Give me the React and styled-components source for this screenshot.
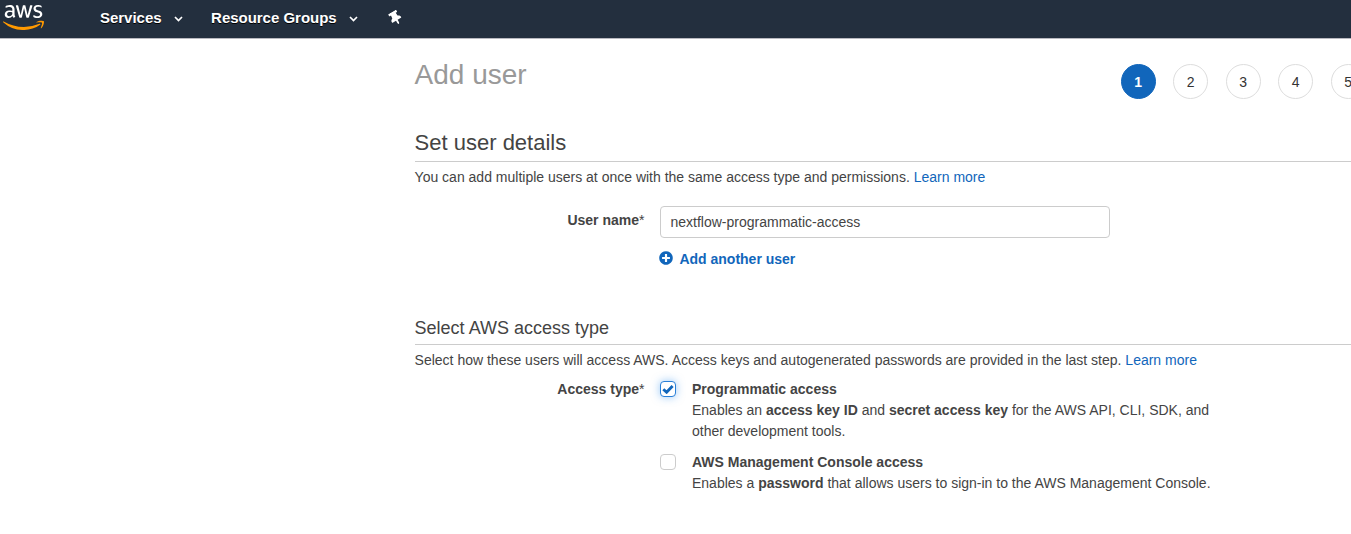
import React from "react";
import styled, { createGlobalStyle } from "styled-components";
import { FaAws, FaPlusCircle, FaThumbtack } from "react-icons/fa";

const GlobalStyle = createGlobalStyle`
  * { box-sizing: border-box; }
  html, body { margin: 0; background: #fff; overflow: hidden; }
  body {
    font-family: "Liberation Sans", Arial, Helvetica, sans-serif;
    font-size: 14px;
    line-height: 21px;
    color: #444;
  }
`;

const Page = styled.div`
  width: 100%;
  height: 534px;
  overflow: hidden;
`;

const NavBar = styled.header`
  display: flex;
  align-items: flex-start;
  height: 39px;
  padding-left: 3px;
  background: #232f3e;
  border-bottom: 1px solid #b9b9c0;
`;

const Logo = styled.div`
  width: 41px;
  height: 25px;
  margin: 5px 56px 0 0;
  svg { display: block; width: 41px; height: 25px; }
  svg + svg { width: 0; height: 0; }
`;

const NavItem = styled.div`
  display: flex;
  align-items: center;
  height: 34px;
  margin-right: ${(p) => p.$gap}px;
  color: #fff;
  font-size: 15px;
  font-weight: bold;
  letter-spacing: -0.02px;
  text-shadow: 0 1px 0 #000;
`;

const Chevron = styled.svg`
  width: 9px;
  height: 6px;
  margin: 4px 0 0 12px;
`;

const Pin = styled(FaThumbtack)`
  width: 11px;
  height: 14px;
  margin-top: 11px;
  color: #fff;
  transform: rotate(-30deg);
`;

const Main = styled.main`
  width: 1100px;
  padding: 25px 0 0 414.6px;
  box-sizing: content-box;
`;

const TitleRow = styled.div`
  display: flex;
  height: 62px;
`;

const Title = styled.h1`
  width: 706px;
  margin: -7px 0 0;
  font-size: 28px;
  line-height: 36px;
  font-weight: normal;
  color: #999;
`;

const Steps = styled.div`
  display: flex;
  gap: 17.5px;
`;

const Step = styled.div`
  display: flex;
  align-items: center;
  justify-content: center;
  width: 35px;
  height: 35px;
  border-radius: 50%;
  padding-top: 1px;
  border: 1px solid ${(p) => (p.$active ? "#1166bb" : "#ddd")};
  background: ${(p) => (p.$active ? "#1166bb" : "#fff")};
  color: ${(p) => (p.$active ? "#fff" : "#333")};
  font-weight: ${(p) => (p.$active ? "bold" : "normal")};
`;

const Heading = styled.h2`
  height: ${(p) => p.$height}px;
  margin: ${(p) => p.$top || 0}px 0 5px;
  border-bottom: 1px solid #ccc;
  font-size: ${(p) => p.$size}px;
  line-height: ${(p) => p.$line}px;
  font-weight: normal;
  color: #444;
`;

const Text = styled.p`
  margin: 0;
`;

const Link = styled.a`
  color: #1166bb;
`;

const FormRow = styled.div`
  display: flex;
  margin-top: ${(p) => p.$top}px;
`;

const Label = styled.div`
  width: 229.9px;
  margin-right: 15.5px;
  padding-top: ${(p) => p.$offset || 0}px;
  text-align: right;
  font-weight: bold;
  span { font-weight: normal; }
`;

const Field = styled.div`
  width: 560px;
`;

const Input = styled.input`
  display: block;
  width: 450px;
  height: 32px;
  padding: 0 9.5px;
  border: 1px solid #ccc;
  border-radius: 4px;
  outline: none;
  font: inherit;
  color: #444;
`;

const AddButton = styled.div`
  display: flex;
  align-items: center;
  gap: 6px;
  margin: 11px 0 0 -0.6px;
  color: #1166bb;
  font-weight: bold;
  svg { width: 14px; height: 14px; margin-top: -3px; }
`;

const Option = styled.div`
  display: flex;
  gap: 16px;
  margin-bottom: 10px;
`;

const Checkbox = styled.div`
  display: flex;
  flex: none;
  align-items: center;
  justify-content: center;
  width: 16px;
  height: 16px;
  margin-top: 2px;
  border: 1px solid ${(p) => (p.$checked ? "#2a80d8" : "#ccc")};
  border-radius: 4px;
  background: #fff;
  box-shadow: ${(p) => (p.$checked ? "0 0 8px rgba(50, 145, 240, 0.5)" : "none")};
  svg { width: 12px; height: 10px; }
`;

const OptionText = styled.div`
  width: 528px;
`;

const Down = () => (
  <Chevron viewBox="0 0 9 6">
    <path d="M1 1l3.5 3.5L8 1" fill="none" stroke="#fff" strokeWidth="1.7" />
  </Chevron>
);

export default function App() {
  return (
    <Page>
      <GlobalStyle />
      <NavBar>
        <Logo>
          <FaAws viewBox="0 64 640 384" preserveAspectRatio="none" fill="url(#awsFill)" />
          <svg>
            <defs>
              <linearGradient id="awsFill" gradientUnits="userSpaceOnUse" x1="0" y1="0" x2="0" y2="512">
                <stop offset="0.57" stopColor="#fff" />
                <stop offset="0.57" stopColor="#f90" />
              </linearGradient>
            </defs>
          </svg>
        </Logo>
        <NavItem $gap={28.5}>Services<Down /></NavItem>
        <NavItem $gap={32.5}>Resource Groups<Down /></NavItem>
        <Pin preserveAspectRatio="none" />
      </NavBar>
      <Main>
        <TitleRow>
          <Title>Add user</Title>
          <Steps>
            {[1, 2, 3, 4, 5].map((n) => (
              <Step key={n} $active={n === 1}>{n}</Step>
            ))}
          </Steps>
        </TitleRow>
        <Heading $size={22} $line={33} $height={36}>Set user details</Heading>
        <Text>
          You can add multiple users at once with the same access type and permissions. <Link>Learn more</Link>
        </Text>
        <FormRow $top={18}>
          <Label $offset={4}>User name<span>*</span></Label>
          <Field>
            <Input defaultValue="nextflow-programmatic-access" />
            <AddButton><FaPlusCircle />Add another user</AddButton>
          </Field>
        </FormRow>
        <Heading $top={45} $size={18} $line={27} $height={30}>Select AWS access type</Heading>
        <Text>
          Select how these users will access AWS. Access keys and autogenerated passwords are provided in the last
          step. <Link>Learn more</Link>
        </Text>
        <FormRow $top={8}>
          <Label>Access type<span>*</span></Label>
          <Field>
            <Option>
              <Checkbox $checked>
                <svg viewBox="0 0 12 10">
                  <path d="M1.3 5.2 4.6 8.2 10.6 1.9" fill="none" stroke="#1166bb" strokeWidth="2.9" />
                </svg>
              </Checkbox>
              <OptionText>
                <b>Programmatic access</b>
                <br />
                Enables an <b>access key ID</b> and <b>secret access key</b> for the AWS API, CLI, SDK, and other
                development tools.
              </OptionText>
            </Option>
            <Option>
              <Checkbox />
              <OptionText>
                <b>AWS Management Console access</b>
                <br />
                Enables a <b>password</b> that allows users to sign-in to the AWS Management Console.
              </OptionText>
            </Option>
          </Field>
        </FormRow>
      </Main>
    </Page>
  );
}
